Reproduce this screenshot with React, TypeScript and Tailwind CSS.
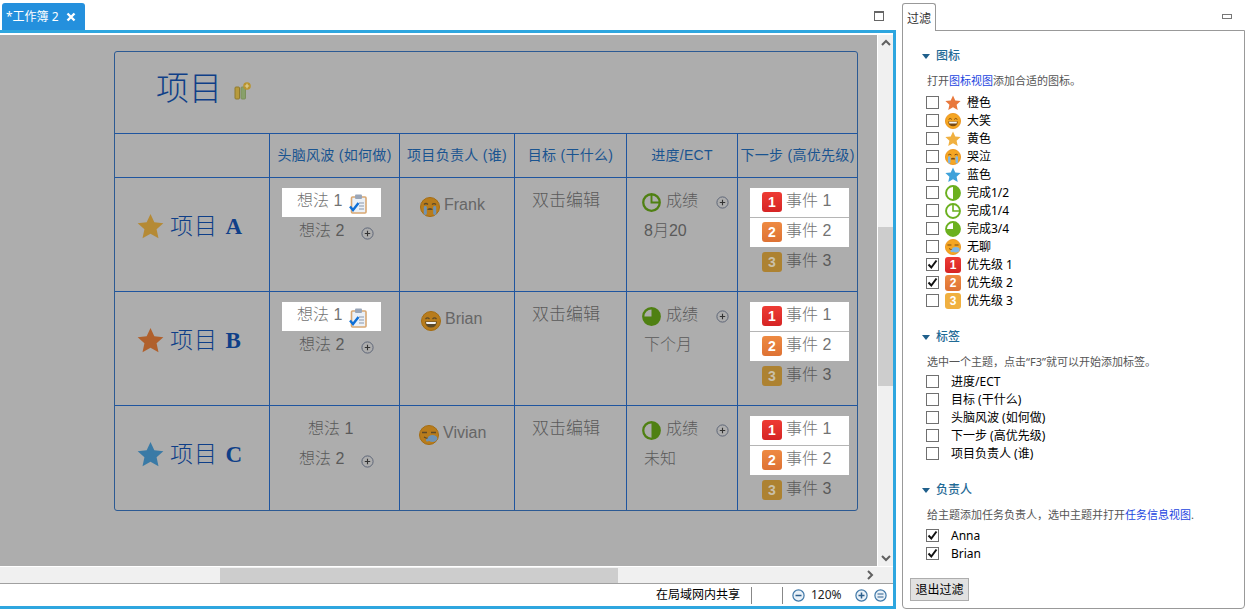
import React from "react";

const Star = ({ c, s = 27 }: { c: string; s?: number }) => (
  <svg width={s} height={s} viewBox="0 0 24 24" className="shrink-0">
    <path d="M12 .8l3.400 7.400 8 .9-6 5.400 1.700 8L12 18.500 4.900 22.500l1.700-8-6-5.400 8-.9z" fill={c} />
  </svg>
);

const Face = ({ kind, dim = false, s = 20 }: { kind: "cry" | "laugh" | "bored"; dim?: boolean; s?: number }) => {
  const fill = dim ? "#b87c1c" : "#f5a623";
  const rim = dim ? "#a56c10" : "#ea8f14";
  const line = dim ? "#5c4a2a" : "#7a4a12";
  const blue = dim ? "#6f93b4" : "#7fb7e6";
  return (
    <svg width={s} height={s} viewBox="0 0 20 20" className="shrink-0">
      <circle cx="10" cy="10" r="9.500" fill={fill} stroke={rim} />
      {kind === "cry" && (
        <>
          <path d="M4 7.500q2-2 4 0M12 7.500q2-2 4 0" fill="none" stroke={line} strokeWidth="1.200" />
          <path d="M7.500 12q2.500-2 5 0v1h-5z" fill={line} />
          <rect x="3.800" y="9" width="3" height="9" rx="1.400" fill={blue} />
          <rect x="13.200" y="9" width="3" height="9" rx="1.400" fill={blue} />
        </>
      )}
      {kind === "laugh" && (
        <>
          <path d="M4.500 8q2-2.400 4 0M11.500 8q2-2.400 4 0" fill="none" stroke={line} strokeWidth="1.200" />
          <path d="M4 10.500h12q-.5 6-6 6t-6-6z" fill={line} />
          <path d="M5 11h10l-.5 2h-9z" fill="#f4f4f4" />
        </>
      )}
      {kind === "bored" && (
        <>
          <path d="M3 7.500h5M12 7.500h5" fill="none" stroke={line} strokeWidth="1.400" />
          <path d="M5 12q3 2 5 1" fill="none" stroke={line} strokeWidth="1.200" />
          <ellipse cx="13.500" cy="13.500" rx="4.800" ry="3.400" fill={blue} />
          <circle cx="8.500" cy="15" r="1.600" fill={blue} />
        </>
      )}
    </svg>
  );
};

const Pie = ({ kind, c, bg, s = 19 }: { kind: "half" | "quarter" | "three"; c: string; bg: string; s?: number }) => (
  <svg width={s} height={s} viewBox="0 0 20 20" className="shrink-0">
    <circle cx="10" cy="10" r="8.700" fill={bg} stroke={c} strokeWidth="2.400" />
    {kind === "half" && <path d="M10 1.500a8.500 8.500 0 0 1 0 17z" fill={c} />}
    {kind === "quarter" && <path d="M10 2v8h8" fill="none" stroke={c} strokeWidth="2" />}
    {kind === "three" && <path d="M10 10V1.500a8.500 8.500 0 1 1-8.500 8.500z" fill={c} />}
  </svg>
);

const PlusCircle = () => (
  <svg width="13" height="13" viewBox="0 0 13 13" className="shrink-0">
    <circle cx="6.500" cy="6.500" r="5.600" fill="none" stroke="#5e6678" strokeWidth="1" />
    <path d="M3.800 6.500h5.400M6.500 3.800v5.400" stroke="#333" strokeWidth="1.100" />
  </svg>
);

const Clipboard = () => (
  <svg width="18" height="20" viewBox="0 0 18 20" className="ml-[7px] mt-[2px] shrink-0">
    <rect x="2.500" y="3" width="14.500" height="16" rx="1" fill="#eaf0f7" stroke="#d9a873" strokeWidth="1.600" />
    <rect x="6" y="0.600" width="7" height="4.400" rx="1" fill="#9aa6b8" />
    <path d="M10 9h5M10 12h5M10 15h5" stroke="#8b97aa" strokeWidth="1" />
    <path d="M1 12.500l3 3.500 5.500-7" fill="none" stroke="#0f6fd6" strokeWidth="2.400" />
  </svg>
);

const TitleIcon = () => (
  <svg width="18" height="19" viewBox="0 0 18 19" className="ml-[12px] shrink-0 mt-[3px]">
    <rect x="1" y="6" width="4.500" height="12" rx="1" fill="#b79a3c" stroke="#8f7a2e" />
    <rect x="7" y="6" width="4.500" height="12" rx="1" fill="#88a06a" stroke="#7c8f5c" />
    <circle cx="13" cy="5" r="3.800" fill="#b9932c" />
    <path d="M13 2.800v4.400M10.800 5h4.400" stroke="#e0d29a" strokeWidth="1.200" />
  </svg>
);

const Badge = ({ n, cls, big = true }: { n: number; cls: string; big?: boolean }) => (
  <span
    className={`${cls} ${big ? "w-[20px] h-[20px] text-[14px]" : "w-[16px] h-[16px] text-[12px]"} shrink-0 flex items-center justify-center rounded-[3px] font-bold leading-none font-['Liberation_Sans',sans-serif]`}
  >
    {n}
  </span>
);

const Chevron = ({ d }: { d: "up" | "down" | "right" }) => (
  <svg width="10" height="10" viewBox="0 0 10 10">
    <path
      d={d === "up" ? "M1 7l4-4 4 4" : d === "down" ? "M1 3l4 4 4-4" : "M3 1l4 4-4 4"}
      fill="none"
      stroke="#606060"
      strokeWidth="2"
    />
  </svg>
);

const Topic = ({ children }: { children: React.ReactNode }) => (
  <span className="text-[16px] text-[#5a5a5a] leading-[24px] font-light">{children}</span>
);

const EventText = ({ children, light }: { children: React.ReactNode; light?: boolean }) => (
  <span className={`ml-[4px] pb-[3px] text-[16px] leading-[24px] font-light ${light ? "text-[#737373]" : "text-[#5a5a5a]"}`}>
    {children}
  </span>
);

const events = (
  <div className="flex flex-col pl-[12px] pt-[10px]">
    <div className="w-[99px] h-[29px] bg-white flex items-center pl-[12px] pb-[1px]">
      <Badge n={1} cls="bg-linear-to-b from-[#ee3b34] to-[#d62424] text-white" />
      <EventText light>事件 1</EventText>
    </div>
    <div className="w-[99px] h-[30px] bg-white border-t border-[#b5b5b5] flex items-center pl-[12px] pb-[1px]">
      <Badge n={2} cls="bg-linear-to-b from-[#ee8a42] to-[#de7234] text-white" />
      <EventText light>事件 2</EventText>
    </div>
    <div className="w-[99px] h-[30px] flex items-center pl-[12px]">
      <Badge n={3} cls="bg-[#ad8231] text-[#c9c0aa]" />
      <EventText>事件 3</EventText>
    </div>
  </div>
);

const cellLine = "border-l border-[#1f559f]";

const ProgressCell = ({ kind, sub }: { kind: "half" | "quarter" | "three"; sub: string }) => (
  <div className={`${cellLine} pt-[15px] pl-[15px]`}>
    <div className="flex items-center h-[19px]">
      <Pie kind={kind} c="#4f8012" bg="#adadad" />
      <span className="ml-[5px] w-[50px] pb-[4px]">
        <Topic>成绩</Topic>
      </span>
      <PlusCircle />
    </div>
    <div className="mt-[7px] pl-[2px]">
      <Topic>{sub}</Topic>
    </div>
  </div>
);

const Row = ({
  star,
  letter,
  plain,
  owner,
  ownerCls,
  face,
  pie,
  sub,
  h,
}: {
  star: string;
  letter: string;
  plain?: boolean;
  owner: string;
  ownerCls: string;
  face: "cry" | "laugh" | "bored";
  pie: "half" | "quarter" | "three";
  sub: string;
  h: string;
}) => (
  <div className={`grid grid-cols-[154px_130px_115px_112px_111px_120px] border-t border-[#1f559f] ${h}`}>
    <div className="flex items-start pl-[22px] pt-[35px]">
      <Star c={star} />
      <span className="ml-[6px] text-[23px] leading-[26px] tracking-[1px] font-light text-[#0f3f88] whitespace-pre">
        项目 <span className="font-['Liberation_Serif',serif] font-bold">{letter}</span>
      </span>
    </div>
    <div className={`${cellLine} pl-[12px] pt-[10px]`}>
      {plain ? (
        <div className="h-[29px] w-[99px] flex items-center pl-[26px] pb-[3px]">
          <Topic>想法 1</Topic>
        </div>
      ) : (
        <div className="h-[29px] w-[99px] bg-white flex items-center pl-[15px]">
          <span className="pb-[3px] text-[16px] text-[#737373] leading-[24px] font-light">想法 1</span>
          <Clipboard />
        </div>
      )}
      <div className="h-[30px] mt-[1px] flex items-center pl-[17px] pb-[4px]">
        <Topic>想法 2</Topic>
        <span className="ml-[17px] mt-[5px]">
          <PlusCircle />
        </span>
      </div>
    </div>
    <div className={`${cellLine} pt-[15px]`}>
      <div className={`flex items-center ${ownerCls}`}>
        <Face kind={face} dim />
        <span className="ml-[4px] pb-[4px] text-[16px] text-[#666]">{owner}</span>
      </div>
    </div>
    <div className={`${cellLine} pl-[17px] pt-[11px]`}>
      <span className="text-[17px] leading-[24px] font-light text-[#5a5a5a]">双击编辑</span>
    </div>
    <ProgressCell kind={pie} sub={sub} />
    <div className={cellLine}>{events}</div>
  </div>
);

const Check = ({ on = false }: { on?: boolean }) => (
  <span className="w-[13px] h-[13px] mb-[1px] border border-[#707070] bg-white shrink-0 flex items-center justify-center">
    {on && (
      <svg width="11" height="11" viewBox="0 0 11 11">
        <path d="M1.500 5.500l2.800 3L9.500 1.500" fill="none" stroke="#111" strokeWidth="2" />
      </svg>
    )}
  </span>
);

const Heading = ({ t, cls }: { t: string; cls: string }) => (
  <div className={`flex items-center h-[16px] pl-[19px] ${cls}`}>
    <svg width="8" height="5" viewBox="0 0 8 5">
      <path d="M0 0h8L4 5z" fill="#1f5f8b" />
    </svg>
    <span className="ml-[6px] text-[12px] font-medium text-[#1f6a96] leading-[16px]">{t}</span>
  </div>
);

const Desc = ({ children }: { children: React.ReactNode }) => (
  <div className="mt-[9px] h-[16px] pl-[24px] text-[11px] leading-[16px] text-[#555] whitespace-nowrap">
    {children}
  </div>
);

const IconRow = ({ icon, t, on }: { icon: React.ReactNode; t: string; on?: boolean }) => (
  <div className="h-[18px] flex items-center pl-[23px]">
    <Check on={on} />
    <span className="ml-[6px] w-[16px] h-[16px] flex items-center justify-center shrink-0">{icon}</span>
    <span className="ml-[6px] text-[12px] text-black leading-[18px]">{t}</span>
  </div>
);

const TextRow = ({ t, on }: { t: string; on?: boolean }) => (
  <div className="h-[18px] flex items-center pl-[23px]">
    <Check on={on} />
    <span className="ml-[12px] text-[12px] text-black leading-[18px]">{t}</span>
  </div>
);

const Link = ({ children }: { children: React.ReactNode }) => <span className="text-[#1a44e0]">{children}</span>;

const StatCircle = ({ kind }: { kind: "minus" | "plus" | "eq" }) => (
  <svg width="13" height="13" viewBox="0 0 13 13" className="shrink-0">
    <circle cx="6.500" cy="6.500" r="5.600" fill="#e9f1f8" stroke="#3f78a8" strokeWidth="1.200" />
    {kind === "minus" && <path d="M3.500 6.500h6" stroke="#2c5f8c" strokeWidth="1.500" />}
    {kind === "plus" && <path d="M3.500 6.500h6M6.500 3.500v6" stroke="#2c5f8c" strokeWidth="1.500" />}
    {kind === "eq" && <path d="M3.500 5h6M3.500 8h6" stroke="#2c5f8c" strokeWidth="1.200" />}
  </svg>
);

export default function App() {
  return (
    <div className="w-[1247px] h-[612px] overflow-hidden flex bg-white font-['Noto_Sans','Noto_Sans_CJK_SC',sans-serif]">
      <div className="w-[896px] flex flex-col shrink-0">
        <div className="h-[30px] flex items-end justify-between pl-[2px]">
          <div className="w-[83px] h-[27px] bg-[#2490dd] rounded-t-[3px] flex items-center pl-[4px] text-white">
            <span className="text-[12px] leading-none whitespace-pre">*工作簿 2</span>
            <svg width="10" height="10" viewBox="0 0 10 10" className="ml-[7px]">
              <path d="M1.500 1.500l7 7M8.500 1.500l-7 7" stroke="#fff" strokeWidth="2.400" />
            </svg>
          </div>
          <div className="mr-[12px] mb-[9px] w-[10px] h-[10px] border border-[#666] border-t-2" />
        </div>
        <div className="h-[579px] border-y-[3px] border-r-[3px] border-[#2ea6df] flex flex-col">
          <div className="h-[533px] pt-[2px] flex">
            <div className="w-[877px] h-[531px] bg-[#adadad] overflow-hidden pl-[114px] pt-[16px] font-['Liberation_Sans','Noto_Sans_CJK_SC',sans-serif]">
              <div className="w-[744px] h-[460px] border border-[#2c5a93] rounded-[3px] flex flex-col">
                <div className="h-[81px] flex items-center pl-[41px] pb-[8px]">
                  <span className="text-[33px] leading-none font-light text-[#0f3f88]">项目</span>
                  <TitleIcon />
                </div>
                <div className="h-[44px] grid grid-cols-[154px_130px_115px_112px_111px_120px] border-t border-[#1f559f] text-[14px] tracking-[0.3px] text-[#1a5490] text-center">
                  <div />
                  {["头脑风波 (如何做)", "项目负责人 (谁)", "目标 (干什么)", "进度/ECT", "下一步 (高优先级)"].map((t) => (
                    <div key={t} className={`${cellLine} flex items-center justify-center whitespace-nowrap`}>
                      {t}
                    </div>
                  ))}
                </div>
                <Row
                  h="h-[114px]"
                  star="#b58a35"
                  letter="A"
                  owner="Frank"
                  ownerCls="pl-[20px]"
                  face="cry"
                  pie="quarter"
                  sub="8月20"
                />
                <Row
                  h="h-[114px]"
                  star="#b0602c"
                  letter="B"
                  owner="Brian"
                  ownerCls="pl-[21px]"
                  face="laugh"
                  pie="three"
                  sub="下个月"
                />
                <Row
                  h="flex-1"
                  star="#3a7aa6"
                  letter="C"
                  plain
                  owner="Vivian"
                  ownerCls="pl-[19px]"
                  face="bored"
                  pie="half"
                  sub="未知"
                />
              </div>
            </div>
            <div className="w-[16px] h-[531px] bg-[#f0f0f0] border-l border-white flex flex-col items-center">
              <div className="h-[16px] flex items-center justify-center shrink-0">
                <Chevron d="up" />
              </div>
              <div className="h-[176px] shrink-0" />
              <div className="w-full h-[159px] bg-[#cdcdcd] shrink-0" />
              <div className="flex-1" />
              <div className="h-[16px] flex items-center justify-center shrink-0">
                <Chevron d="down" />
              </div>
            </div>
          </div>
          <div className="h-[17px] bg-[#f0f0f0] border-t border-white flex items-center pl-[220px]">
            <div className="w-[398px] h-[15px] bg-[#cdcdcd]" />
            <div className="flex-1" />
            <div className="w-[16px] mr-[15px] flex justify-center">
              <Chevron d="right" />
            </div>
          </div>
          <div className="h-[23px] border-t border-[#a0a0a0] bg-white flex items-center justify-end pr-[6px]">
            <span className="text-[12px] text-black">在局域网内共享</span>
            <span className="ml-[11px] w-px h-[17px] bg-[#888]" />
            <span className="ml-[30px] w-px h-[17px] bg-[#888]" />
            <span className="ml-[9px]">
              <StatCircle kind="minus" />
            </span>
            <span className="ml-[6px] w-[32px] text-[12px] text-[#222]">120%</span>
            <span className="ml-[12px]">
              <StatCircle kind="plus" />
            </span>
            <span className="ml-[6px]">
              <StatCircle kind="eq" />
            </span>
          </div>
        </div>
      </div>

      <div className="ml-[6px] w-[343px] flex flex-col">
        <div className="h-[30px] flex items-end justify-between relative z-10">
          <div className="w-[34px] h-[28px] -mb-px pt-[2px] bg-white border border-b-0 border-[#999] rounded-t-[3px] flex items-center justify-center text-[12px] text-[#333]">
            过滤
          </div>
          <div className="mr-[13px] mb-[11px] w-[10px] h-[5px] border border-[#777]" />
        </div>
        <div className="h-[579px] border border-[#999] rounded-b-[4px] pt-[17px]">
          <Heading t="图标" cls="" />
          <Desc>
            打开<Link>图标视图</Link>添加合适的图标。
          </Desc>
          <div className="mt-[5px]">
            <IconRow t="橙色" icon={<Star c="#e8783c" s={16} />} />
            <IconRow t="大笑" icon={<Face kind="laugh" s={16} />} />
            <IconRow t="黄色" icon={<Star c="#f0b040" s={16} />} />
            <IconRow t="哭泣" icon={<Face kind="cry" s={16} />} />
            <IconRow t="蓝色" icon={<Star c="#3fa2da" s={16} />} />
            <IconRow t="完成1/2" icon={<Pie kind="half" c="#6bb01f" bg="#fff" s={16} />} />
            <IconRow t="完成1/4" icon={<Pie kind="quarter" c="#6bb01f" bg="#fff" s={16} />} />
            <IconRow t="完成3/4" icon={<Pie kind="three" c="#6bb01f" bg="#fff" s={16} />} />
            <IconRow t="无聊" icon={<Face kind="bored" s={16} />} />
            <IconRow t="优先级 1" on icon={<Badge n={1} big={false} cls="bg-linear-to-b from-[#ee3b34] to-[#d62424] text-white" />} />
            <IconRow t="优先级 2" on icon={<Badge n={2} big={false} cls="bg-linear-to-b from-[#ee8a42] to-[#de7234] text-white" />} />
            <IconRow t="优先级 3" icon={<Badge n={3} big={false} cls="bg-[#f0b040] text-white" />} />
          </div>
          <Heading t="标签" cls="mt-[19px]" />
          <Desc>选中一个主题，点击“F3”就可以开始添加标签。</Desc>
          <div className="mt-[3px]">
            {["进度/ECT", "目标 (干什么)", "头脑风波 (如何做)", "下一步 (高优先级)", "项目负责人 (谁)"].map((t) => (
              <TextRow key={t} t={t} />
            ))}
          </div>
          <Heading t="负责人" cls="mt-[19px]" />
          <Desc>
            给主题添加任务负责人，选中主题并打开<Link>任务信息视图</Link>.
          </Desc>
          <div className="mt-[4px]">
            <TextRow t="Anna" on />
            <TextRow t="Brian" on />
          </div>
          <button className="mt-[15px] ml-[7px] w-[59px] h-[23px] bg-[#e1e1e1] border border-[#adadad] text-[12px] text-black flex items-center justify-center">
            退出过滤
          </button>
        </div>
      </div>
    </div>
  );
}
